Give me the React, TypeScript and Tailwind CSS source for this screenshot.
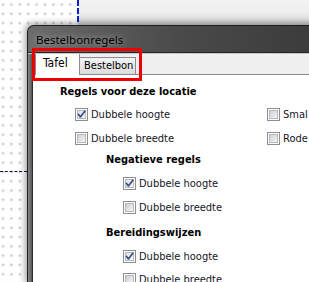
import React, { useId } from 'react';

const tahoma = "font-['DejaVu_Sans_Condensed','DejaVu_Sans',sans-serif] font-stretch-condensed";

function CheckBox({ checked }: { checked?: boolean }) {
    const id = useId().replace(/:/g, '');
    return (
        <svg width="13" height="13" viewBox="0 0 13 13" className="shrink-0">
            <defs>
                <linearGradient id={`cb-${id}`} x1="0" y1="0" x2="1" y2="1">
                    <stop offset="0" stopColor={checked ? '#dfe3ea' : '#c9ccd1'} />
                    <stop offset="1" stopColor="#f7f7f7" />
                </linearGradient>
            </defs>
            <rect x="0.5" y="0.5" width="12" height="12" fill="#fdfdfd" stroke="#8e8f8f" />
            <rect x="2.5" y="2.5" width="8" height="8" fill={`url(#cb-${id})`} stroke="#b6b9bf" />
            {checked && (
                <path d="M3.4 6.3 L5.4 8.9 L9.8 3.2" fill="none" stroke="#3a4f86" strokeWidth="1.7" strokeLinecap="round" strokeLinejoin="round" />
            )}
        </svg>
    );
}

function Option({ label, checked, className = '' }: { label: string; checked?: boolean; className?: string }) {
    return (
        <div className={`flex items-center h-[13px] gap-[3px] shrink-0 ${className}`}>
            <CheckBox checked={checked} />
            <span className={`${tahoma} text-[11px] leading-[13px] text-[#161626] whitespace-nowrap`}>{label}</span>
        </div>
    );
}

function Heading({ children, className = '' }: { children: React.ReactNode; className?: string }) {
    return (
        <div className={`${tahoma} font-bold text-[11px] leading-[13px] text-black whitespace-nowrap ${className}`}>{children}</div>
    );
}

export default function App() {
    return (
        <div className="relative w-[309px] h-[282px] overflow-hidden bg-white">
            {/* designer grid */}
            <svg className="absolute inset-0" width="309" height="282">
                <defs>
                    <pattern id="grid" x="-1" y="0" width="8.4" height="9.3" patternUnits="userSpaceOnUse">
                        <path d="M2.5 4.5 H5.5 M4 3 V6" stroke="#c8c8c8" strokeWidth="1" />
                    </pattern>
                </defs>
                <rect width="309" height="282" fill="url(#grid)" />
            </svg>

            <div className="relative flex flex-col w-full h-full">
                {/* top strip */}
                <div className="flex h-[25px] shrink-0">
                    <div className="w-[79px] h-[22px] border-r-2 border-dashed border-[#1020d0]" />
                    <div className="flex-1 bg-gradient-to-b from-[#f3f3f3] via-[#eeeeee] to-[#d2d2d2]" />
                </div>

                <div className="flex flex-1">
                    {/* left gutter */}
                    <div className="w-[27px] shrink-0 pt-[146px]">
                        <div className="h-0 w-[27px] border-t border-dashed border-[#101040]" />
                    </div>

                    {/* window */}
                    <div className="flex flex-col w-[300px] shrink-0 rounded-tl-[7px] border-t border-l border-[#1e1e1e] bg-[#3c3c3c] shadow-[-2px_-2px_6px_rgba(0,0,0,0.35)]">
                        <div className="h-[27px] shrink-0 flex items-center pl-[8px] pt-px rounded-tl-[6px] bg-gradient-to-r from-[#6c6c6c] via-[#4a4a4a] to-[#3a3a3a] border-b border-[#262626]">
                            <span className="font-['Noto_Sans',sans-serif] text-[11.5px] text-black [text-shadow:0_0_6px_rgba(255,255,255,0.6)]">Bestelbonregels</span>
                        </div>
                        <div className="flex flex-1 min-w-0 border-t border-[#c8c8c8]">
                            <div className="w-[4px] shrink-0 bg-gradient-to-r from-[#8a8a8a] to-[#565656] border-r border-[#2a2a2a] box-content" />
                            <div className="flex-1 min-w-0 flex flex-col bg-white overflow-hidden">
                                {/* tab strip */}
                                <div className="h-[21px] shrink-0 flex items-end bg-[#f0f0f0] border-b border-[#898c95] pl-[2px]">
                                    <div className={`${tahoma} relative -mb-px h-[22px] w-[45px] shrink-0 bg-white border border-b-0 border-[#898c95] pl-[7px] pt-[2px] text-[12px] leading-[15px] text-black`}>Tafel</div>
                                    <div className={`${tahoma} h-[17px] w-[56px] shrink-0 bg-gradient-to-b from-[#f3f3f3] to-[#dcdcdc] border border-b-0 border-l-0 border-[#898c95] pl-[4px] text-[11px] leading-[16px] text-black`}>Bestelbon</div>
                                </div>

                                {/* tab page */}
                                <div className="flex flex-col pt-[10px]">
                                    <Heading className="pl-[27px]">Regels voor deze locatie</Heading>
                                    <div className="flex mt-[10px] pl-[42px]">
                                        <Option label="Dubbele hoogte" checked className="w-[192px]" />
                                        <Option label="Smal lettertype" />
                                    </div>
                                    <div className="flex mt-[11px] pl-[42px]">
                                        <Option label="Dubbele breedte" className="w-[192px]" />
                                        <Option label="Rode kleur" />
                                    </div>

                                    <Heading className="pl-[73px] mt-[8px]">Negatieve regels</Heading>
                                    <Option label="Dubbele hoogte" checked className="ml-[90px] mt-[11px]" />
                                    <Option label="Dubbele breedte" className="ml-[90px] mt-[11px]" />

                                    <Heading className="pl-[73px] mt-[12px]">Bereidingswijzen</Heading>
                                    <Option label="Dubbele hoogte" checked className="ml-[90px] mt-[11px]" />
                                    <Option label="Dubbele breedte" className="ml-[90px] mt-[10px]" />
                                </div>
                            </div>
                        </div>
                    </div>
                </div>
            </div>

            {/* annotation box */}
            <div className="absolute left-[32px] top-[48px] w-[110px] h-[33px] border-[3px] border-[#ee0000]" />
        </div>
    );
}
